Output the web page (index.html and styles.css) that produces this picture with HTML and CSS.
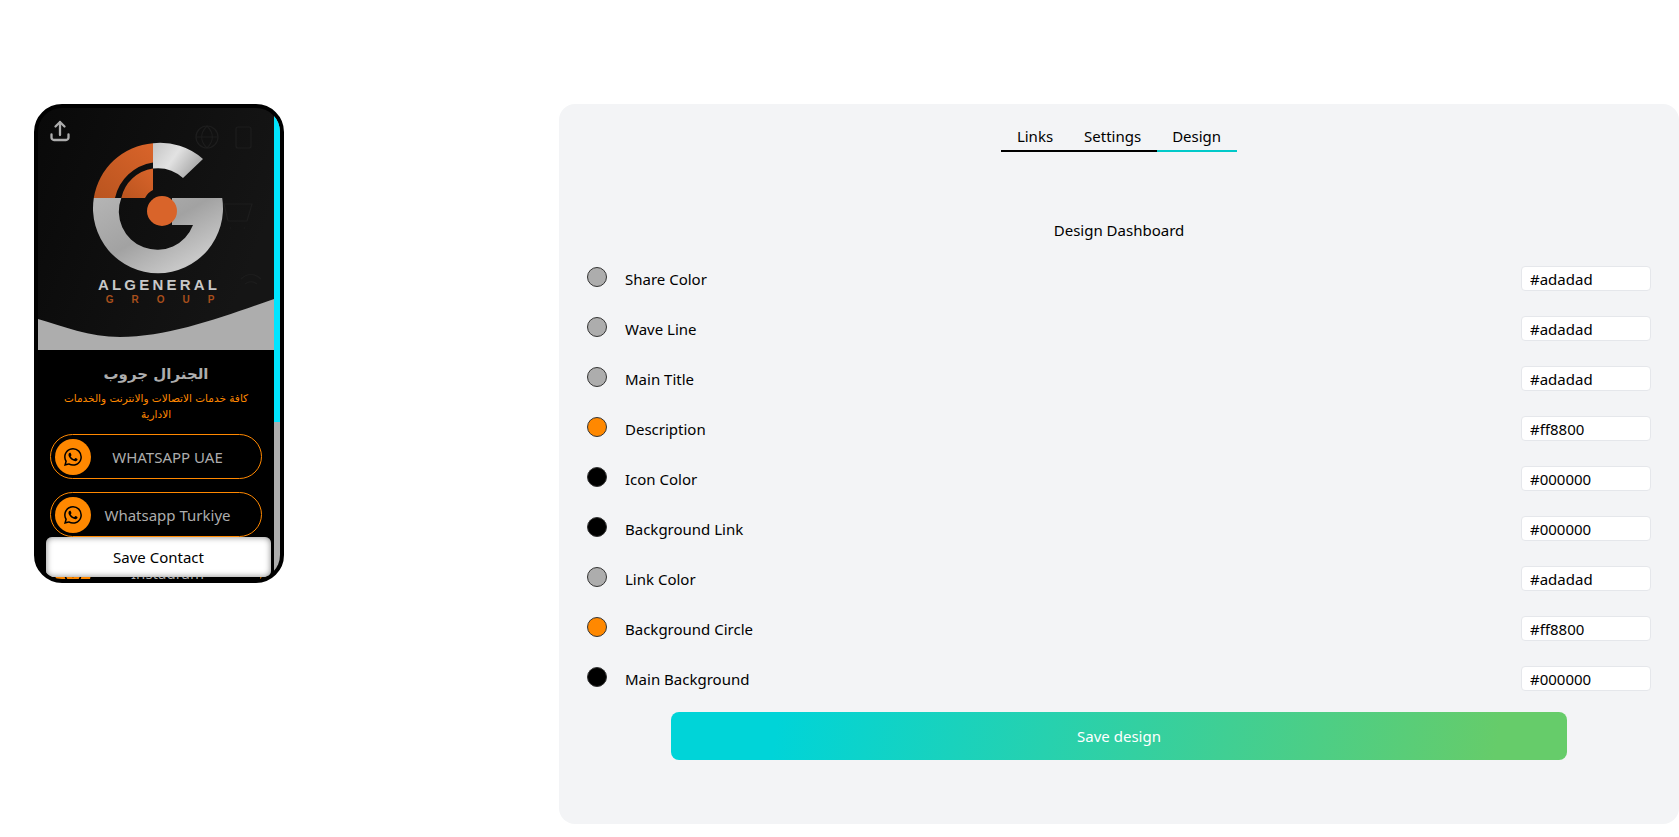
FILE: index.html
```html
<!DOCTYPE html>
<html lang="en">
<head>
  <meta charset="UTF-8" />
  <title>Design Dashboard</title>
  <link rel="stylesheet" href="styles.css">
</head>
<body>
  <div class="page">
    <!-- phone preview -->
    <div class="phone">
      <div class="screen">
        <div class="screen-content">
          <svg class="hero" viewBox="38 108 236 242" width="236" height="242">
            <defs>
              <linearGradient id="heroBg" x1="0" y1="0" x2="1" y2="0.4">
                <stop offset="0" stop-color="#090909"/>
                <stop offset="1" stop-color="#151515"/>
              </linearGradient>
              <linearGradient id="silverLow" x1="0" y1="0" x2="1" y2="1">
                <stop offset="0" stop-color="#b5b5b5"/>
                <stop offset="0.45" stop-color="#a2a2a2"/>
                <stop offset="0.8" stop-color="#c8c8c8"/>
                <stop offset="1" stop-color="#8e8e8e"/>
              </linearGradient>
              <linearGradient id="silverTop" x1="0" y1="0" x2="1" y2="0.5">
                <stop offset="0" stop-color="#c4c4c4"/>
                <stop offset="0.5" stop-color="#e2e2e2"/>
                <stop offset="1" stop-color="#a8a8a8"/>
              </linearGradient>
              <linearGradient id="orangeFill" x1="0" y1="1" x2="1" y2="0">
                <stop offset="0" stop-color="#b9541f"/>
                <stop offset="1" stop-color="#d9642a"/>
              </linearGradient>
            </defs>
            <rect x="38" y="108" width="236" height="242" fill="url(#heroBg)"/>
            <!-- faint icons behind the logo -->
            <g fill="none" stroke="#1d1d1d" stroke-width="1.2">
              <circle cx="207" cy="137" r="11"/>
              <path d="M196 137h22M207 126c-7 7-7 15 0 22M207 126c7 7 7 15 0 22"/>
              <rect x="236" y="127" width="15" height="21" rx="2"/>
              <path d="M224 204h28l-5 17h-19zM230 228h1M244 228h1"/>
              <path d="M241 279c6-6 14-6 20 0M245 284c4-3 8-3 12 0"/>
            </g>
            <!-- logo -->
            <path fill="url(#orangeFill)" d="M93.8 198A65 65 0 0 1 153 143.2V162.5A46 46 0 0 0 115 198Z"/>
            <path fill="url(#orangeFill)" d="M121.3 198A38 38 0 0 1 153 168.5V190A17 17 0 0 0 145 198Z"/>
            <path fill="url(#silverTop)" d="M153 143.2A65 65 0 0 1 203 159L183 178A38 38 0 0 0 153 168.5Z"/>
            <path fill="url(#silverLow)" d="M93.8 198H121.3A38 38 0 0 0 193 225H172V198H222.2A65 65 0 1 1 93.8 198Z"/>
            <circle cx="162" cy="211" r="15" fill="#d9642a"/>
            <text class="logo-name" x="159" y="290" text-anchor="middle">ALGENERAL</text>
            <text class="logo-group" x="169" y="303" text-anchor="middle">GROUP</text>
            <!-- wave -->
            <path fill="#adadad" d="M38 319C62 326 90 337 120 337C170 337 225 316 274 299V350H38Z"/>
          </svg>

          <button class="share-btn" aria-label="Share">
            <svg viewBox="0 0 24 24" width="24" height="24" fill="none" stroke="#adadad" stroke-width="2.3" stroke-linecap="round" stroke-linejoin="round">
              <path d="M3.5 15.5v3a2.5 2.5 0 0 0 2.5 2.5h12a2.5 2.5 0 0 0 2.5-2.5v-3"/>
              <path d="M7.5 7.5 12 3l4.5 4.5M12 3v13"/>
            </svg>
          </button>

          <h2 class="profile-name">الجنرال جروب</h2>
          <p class="profile-desc">كافة خدمات الاتصالات والانترنت والخدمات<br>الادارية</p>

          <div class="links">
            <a class="link-pill">
              <span class="link-icon">
                <svg viewBox="0 0 16 16" width="18" height="18" fill="#000"><path d="M13.601 2.326A7.854 7.854 0 0 0 7.994 0C3.627 0 .068 3.558.064 7.926c0 1.399.366 2.76 1.057 3.965L0 16l4.204-1.102a7.933 7.933 0 0 0 3.79.965h.004c4.368 0 7.926-3.558 7.93-7.93A7.898 7.898 0 0 0 13.6 2.326zM7.994 14.521a6.573 6.573 0 0 1-3.356-.92l-.24-.144-2.494.654.666-2.433-.156-.251a6.56 6.56 0 0 1-1.007-3.505c0-3.626 2.957-6.584 6.591-6.584a6.56 6.56 0 0 1 4.66 1.931 6.557 6.557 0 0 1 1.928 4.66c-.004 3.639-2.961 6.592-6.592 6.592zm3.615-4.934c-.197-.099-1.17-.578-1.353-.646-.182-.065-.315-.099-.445.099-.133.197-.513.646-.627.775-.114.133-.232.148-.43.05-.197-.1-.836-.308-1.592-.985-.59-.525-.985-1.175-1.103-1.372-.114-.198-.011-.304.088-.403.087-.088.197-.232.296-.346.1-.114.133-.198.198-.33.065-.134.034-.248-.015-.347-.05-.099-.445-1.076-.612-1.47-.16-.389-.323-.335-.445-.34-.114-.007-.247-.007-.38-.007a.729.729 0 0 0-.529.247c-.182.198-.691.677-.691 1.654 0 .977.71 1.916.81 2.049.098.133 1.394 2.132 3.383 2.992.47.205.84.326 1.129.418.475.152.904.129 1.246.08.38-.058 1.171-.48 1.338-.943.164-.464.164-.86.114-.943-.049-.084-.182-.133-.38-.232z"/></svg>
              </span>
              <span class="link-text">WHATSAPP UAE</span>
            </a>
            <a class="link-pill">
              <span class="link-icon">
                <svg viewBox="0 0 16 16" width="18" height="18" fill="#000"><path d="M13.601 2.326A7.854 7.854 0 0 0 7.994 0C3.627 0 .068 3.558.064 7.926c0 1.399.366 2.76 1.057 3.965L0 16l4.204-1.102a7.933 7.933 0 0 0 3.79.965h.004c4.368 0 7.926-3.558 7.93-7.93A7.898 7.898 0 0 0 13.6 2.326zM7.994 14.521a6.573 6.573 0 0 1-3.356-.92l-.24-.144-2.494.654.666-2.433-.156-.251a6.56 6.56 0 0 1-1.007-3.505c0-3.626 2.957-6.584 6.591-6.584a6.56 6.56 0 0 1 4.66 1.931 6.557 6.557 0 0 1 1.928 4.66c-.004 3.639-2.961 6.592-6.592 6.592zm3.615-4.934c-.197-.099-1.17-.578-1.353-.646-.182-.065-.315-.099-.445.099-.133.197-.513.646-.627.775-.114.133-.232.148-.43.05-.197-.1-.836-.308-1.592-.985-.59-.525-.985-1.175-1.103-1.372-.114-.198-.011-.304.088-.403.087-.088.197-.232.296-.346.1-.114.133-.198.198-.33.065-.134.034-.248-.015-.347-.05-.099-.445-1.076-.612-1.47-.16-.389-.323-.335-.445-.34-.114-.007-.247-.007-.38-.007a.729.729 0 0 0-.529.247c-.182.198-.691.677-.691 1.654 0 .977.71 1.916.81 2.049.098.133 1.394 2.132 3.383 2.992.47.205.84.326 1.129.418.475.152.904.129 1.246.08.38-.058 1.171-.48 1.338-.943.164-.464.164-.86.114-.943-.049-.084-.182-.133-.38-.232z"/></svg>
              </span>
              <span class="link-text">Whatsapp Turkiye</span>
            </a>
            <a class="link-pill">
              <span class="link-icon">
                <svg viewBox="0 0 24 24" width="20" height="20" fill="none" stroke="#000" stroke-width="2"><rect x="3" y="3" width="18" height="18" rx="5"/><circle cx="12" cy="12" r="4"/></svg>
              </span>
              <span class="link-text">Instagram</span>
            </a>
          </div>
        </div>
        <div class="scrollbar"><div class="scrollbar-thumb"></div></div>
      </div>
      <button class="save-contact">Save Contact</button>
    </div>

    <!-- settings panel -->
    <div class="panel">
      <div class="tabs">
        <a class="tab">Links</a>
        <a class="tab">Settings</a>
        <a class="tab active">Design</a>
      </div>

      <h3 class="panel-title">Design Dashboard</h3>

      <div class="color-list">
        <div class="color-row">
          <span class="swatch swatch-grey"></span>
          <label class="color-label">Share Color</label>
          <input class="color-input" type="text" value="#adadad" />
        </div>
        <div class="color-row">
          <span class="swatch swatch-grey"></span>
          <label class="color-label">Wave Line</label>
          <input class="color-input" type="text" value="#adadad" />
        </div>
        <div class="color-row">
          <span class="swatch swatch-grey"></span>
          <label class="color-label">Main Title</label>
          <input class="color-input" type="text" value="#adadad" />
        </div>
        <div class="color-row">
          <span class="swatch swatch-orange"></span>
          <label class="color-label">Description</label>
          <input class="color-input" type="text" value="#ff8800" />
        </div>
        <div class="color-row">
          <span class="swatch swatch-black"></span>
          <label class="color-label">Icon Color</label>
          <input class="color-input" type="text" value="#000000" />
        </div>
        <div class="color-row">
          <span class="swatch swatch-black"></span>
          <label class="color-label">Background Link</label>
          <input class="color-input" type="text" value="#000000" />
        </div>
        <div class="color-row">
          <span class="swatch swatch-grey"></span>
          <label class="color-label">Link Color</label>
          <input class="color-input" type="text" value="#adadad" />
        </div>
        <div class="color-row">
          <span class="swatch swatch-orange"></span>
          <label class="color-label">Background Circle</label>
          <input class="color-input" type="text" value="#ff8800" />
        </div>
        <div class="color-row">
          <span class="swatch swatch-black"></span>
          <label class="color-label">Main Background</label>
          <input class="color-input" type="text" value="#000000" />
        </div>
      </div>

      <button class="save-design">Save design</button>
    </div>
  </div>
</body>
</html>
```

FILE: styles.css
```css
* {
  box-sizing: border-box;
}
html, body {
  margin: 0;
  height: 100%;
  overflow: hidden;
}
body {
  font-family: "Noto Sans", "Open Sans", sans-serif;
  font-size: 15px;
  color: #000;
  background-color: #fff;
}
.page {
  display: flex;
  align-items: flex-start;
  gap: 275px;
  padding: 104px 0 0 34px;
}

/* phone */
.phone {
  position: relative;
  flex: none;
  width: 250px;
  height: 479px;
  border: 4px solid #000;
  border-radius: 28px;
  background-color: #000;
  overflow: hidden;
}
.screen {
  display: flex;
  height: 100%;
  overflow: hidden;
}
.screen-content {
  position: relative;
  flex: none;
  width: 236px;
  background-color: #000;
}
.hero {
  display: block;
}
.logo-name {
  font-family: "Liberation Sans", sans-serif;
  font-weight: 700;
  font-size: 15px;
  letter-spacing: 3.2px;
  fill: #c8c8c8;
}
.logo-group {
  font-family: "Liberation Sans", sans-serif;
  font-weight: 700;
  font-size: 10px;
  letter-spacing: 18px;
  fill: #a84f1c;
}
.share-btn {
  position: absolute;
  top: 11px;
  left: 10px;
  padding: 0;
  border: none;
  background: none;
  line-height: 0;
}
.profile-name {
  margin: 12px 0 0;
  font-family: "DejaVu Sans", sans-serif;
  font-size: 15px;
  font-weight: 700;
  line-height: 24px;
  text-align: center;
  color: #adadad;
}
.profile-desc {
  margin: 4px 0 0;
  padding: 0 12px;
  font-family: "DejaVu Sans", sans-serif;
  font-size: 10.5px;
  line-height: 16px;
  text-align: center;
  color: #ff8800;
}
.links {
  display: flex;
  flex-direction: column;
  gap: 13px;
  margin-top: 12px;
  padding: 0 12px;
}
.link-pill {
  display: flex;
  align-items: center;
  height: 45px;
  padding: 0 17px 0 4px;
  border: 1px solid #ff8800;
  border-radius: 23px;
}
.link-icon {
  display: flex;
  flex: none;
  align-items: center;
  justify-content: center;
  width: 36px;
  height: 36px;
  border-radius: 50%;
  background-color: #ff8800;
}
.link-text {
  flex: 1;
  font-size: 15px;
  text-align: center;
  color: #adadad;
}
.scrollbar {
  flex: none;
  width: 6px;
  background-color: #adadad;
}
.scrollbar-thumb {
  height: 314px;
  background-color: #00e5ff;
}
.save-contact {
  position: absolute;
  top: 429px;
  left: 8px;
  width: 225px;
  height: 40px;
  border: none;
  border-radius: 6px;
  background-color: #fff;
  box-shadow: inset 0 0 6px rgba(0, 0, 0, 0.5);
  font-family: inherit;
  font-size: 15px;
  color: #000;
}

/* settings panel */
.panel {
  flex: 1;
  height: 720px;
  padding: 20px 28px 0 28px;
  border-radius: 16px;
  background-color: #f3f4f6;
}
.tabs {
  display: flex;
  justify-content: center;
}
.tab {
  padding: 0 15.5px 2px;
  line-height: 24px;
  border-bottom: 2px solid #000;
}
.tab.active {
  border-bottom-color: #00c9c9;
}
.panel-title {
  margin: 66px 0 24px;
  font-size: 15px;
  font-weight: 400;
  line-height: 24px;
  text-align: center;
}
.color-list {
  display: flex;
  flex-direction: column;
  gap: 25px;
}
.color-row {
  display: flex;
  align-items: center;
  height: 25px;
}
.swatch {
  flex: none;
  width: 20px;
  height: 20px;
  margin-bottom: 4px;
  border: 1px solid #333;
  border-radius: 50%;
}
.swatch-grey {
  background-color: #adadad;
}
.swatch-orange {
  background-color: #ff8800;
}
.swatch-black {
  background-color: #000;
}
.color-label {
  flex: 1;
  margin-left: 18px;
}
.color-input {
  flex: none;
  width: 130px;
  height: 25px;
  padding: 0 8px;
  border: 1px solid #e5e7eb;
  border-radius: 4px;
  background-color: #fff;
  font-family: inherit;
  font-size: 15px;
  color: #000;
}
.save-design {
  display: block;
  width: 896px;
  height: 48px;
  margin: 21px 0 0 84px;
  border: none;
  border-radius: 8px;
  background: linear-gradient(100deg, #00d4d8 12%, #66cc6a 92%);
  font-family: inherit;
  font-size: 15px;
  color: #fff;
}
```
